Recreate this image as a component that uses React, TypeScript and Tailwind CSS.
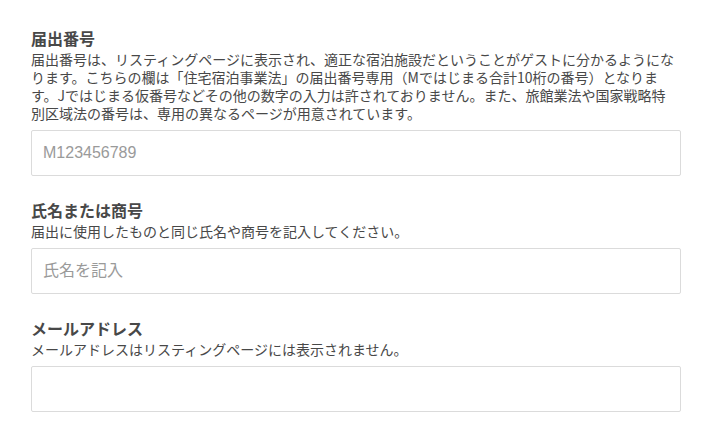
const font = { fontFamily: '"Noto Sans CJK JP", "Noto Sans", sans-serif' }

function Field({
  label,
  children,
  placeholder,
}: {
  label: string
  children: React.ReactNode
  placeholder?: string
}) {
  return (
    <div className="flex flex-col">
      <div className="text-[16px] font-bold leading-[20px] text-[#484848]">{label}</div>
      <div className="mt-[2px] text-[14px] leading-[18px] text-[#484848] whitespace-nowrap">
        {children}
      </div>
      <input
        type="text"
        placeholder={placeholder}
        className="mt-[8px] h-[46px] w-full rounded-[2px] border border-[#dbdbdb] bg-white px-[11px] text-[16px] text-[#484848] outline-none placeholder:text-[#9a9a9a]"
        style={{ fontFamily: '"Liberation Sans", "Noto Sans CJK JP", sans-serif' }}
      />
    </div>
  )
}

export default function App() {
  return (
    <div className="min-h-[431px] bg-white" style={font}>
      <div className="ml-[31px] w-[650px] pt-[28px] flex flex-col gap-[24px]">
        <Field label="届出番号" placeholder="M123456789">
          届出番号は、リスティングページに表示され、適正な宿泊施設だということがゲストに分かるようにな
          <br />
          ります。こちらの欄は「住宅宿泊事業法」の届出番号専用（Mではじまる合計10桁の番号）となりま
          <br />
          す。Jではじまる仮番号などその他の数字の入力は許されておりません。また、旅館業法や国家戦略特
          <br />
          別区域法の番号は、専用の異なるページが用意されています。
        </Field>
        <Field label="氏名または商号" placeholder="氏名を記入">
          届出に使用したものと同じ氏名や商号を記入してください。
        </Field>
        <Field label="メールアドレス">
          メールアドレスはリスティングページには表示されません。
        </Field>
      </div>
    </div>
  )
}
